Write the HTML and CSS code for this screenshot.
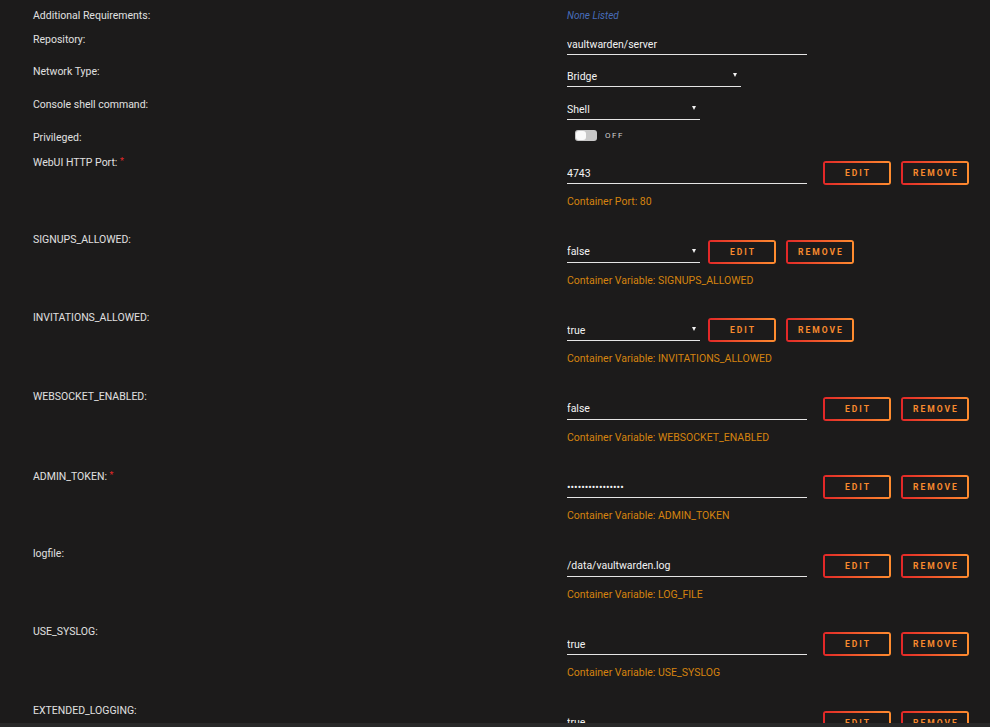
FILE: index.html
```html
<!DOCTYPE html>
<html>
<head>
    <title>Update Container - vaultwarden</title>
    <link rel="stylesheet" href="styles.css">
</head>
<body>
    <form class="template" id="templateForm">
        <div class="row row-a">
            <div class="label">Additional Requirements:</div>
            <div class="value"><span class="blue-text">None Listed</span></div>
        </div>

        <div class="row row-b">
            <div class="label">Repository:</div>
            <div class="value pad1">
                <input type="text" class="text-input" name="repository" value="vaultwarden/server">
            </div>
        </div>

        <div class="row row-c">
            <div class="label">Network Type:</div>
            <div class="value pad1">
                <span class="select-wrap wide">
                    <select name="network">
                        <option>Bridge</option>
                        <option>Host</option>
                        <option>None</option>
                    </select>
                </span>
            </div>
        </div>

        <div class="row row-c">
            <div class="label">Console shell command:</div>
            <div class="value pad1">
                <span class="select-wrap">
                    <select name="shell">
                        <option>Shell</option>
                        <option>Bash</option>
                    </select>
                </span>
            </div>
        </div>

        <div class="row row-e">
            <div class="label">Privileged:</div>
            <div class="value pad1">
                <label class="switch">
                    <span class="switch-track"><span class="switch-knob"></span></span>
                    <span class="switch-text">OFF</span>
                </label>
            </div>
        </div>

        <!-- config entries -->
        <div class="row row-config">
            <div class="label">WebUI HTTP Port: <span class="required">*</span></div>
            <div class="value pad9">
                <div class="field">
                    <input type="text" class="text-input spaced" value="4743">
                    <button type="button" class="btn">Edit</button>
                    <button type="button" class="btn">Remove</button>
                </div>
                <div class="orange-text">Container Port: 80</div>
            </div>
        </div>

        <div class="row row-config">
            <div class="label">SIGNUPS_ALLOWED:</div>
            <div class="value pad9">
                <div class="field">
                    <span class="select-wrap">
                        <select><option>false</option><option>true</option></select>
                    </span>
                    <button type="button" class="btn">Edit</button>
                    <button type="button" class="btn">Remove</button>
                </div>
                <div class="orange-text">Container Variable: SIGNUPS_ALLOWED</div>
            </div>
        </div>

        <div class="row row-config">
            <div class="label">INVITATIONS_ALLOWED:</div>
            <div class="value pad9">
                <div class="field">
                    <span class="select-wrap">
                        <select><option>true</option><option>false</option></select>
                    </span>
                    <button type="button" class="btn">Edit</button>
                    <button type="button" class="btn">Remove</button>
                </div>
                <div class="orange-text">Container Variable: INVITATIONS_ALLOWED</div>
            </div>
        </div>

        <div class="row row-config">
            <div class="label">WEBSOCKET_ENABLED:</div>
            <div class="value pad9">
                <div class="field">
                    <input type="text" class="text-input spaced" value="false">
                    <button type="button" class="btn">Edit</button>
                    <button type="button" class="btn">Remove</button>
                </div>
                <div class="orange-text">Container Variable: WEBSOCKET_ENABLED</div>
            </div>
        </div>

        <div class="row row-config">
            <div class="label">ADMIN_TOKEN: <span class="required">*</span></div>
            <div class="value pad9">
                <div class="field">
                    <input type="password" class="text-input spaced" value="abcdefghijklmnop">
                    <button type="button" class="btn">Edit</button>
                    <button type="button" class="btn">Remove</button>
                </div>
                <div class="orange-text">Container Variable: ADMIN_TOKEN</div>
            </div>
        </div>

        <div class="row row-config">
            <div class="label">logfile:</div>
            <div class="value pad9">
                <div class="field">
                    <input type="text" class="text-input spaced" value="/data/vaultwarden.log">
                    <button type="button" class="btn">Edit</button>
                    <button type="button" class="btn">Remove</button>
                </div>
                <div class="orange-text">Container Variable: LOG_FILE</div>
            </div>
        </div>

        <div class="row row-config">
            <div class="label">USE_SYSLOG:</div>
            <div class="value pad9">
                <div class="field">
                    <input type="text" class="text-input spaced" value="true">
                    <button type="button" class="btn">Edit</button>
                    <button type="button" class="btn">Remove</button>
                </div>
                <div class="orange-text">Container Variable: USE_SYSLOG</div>
            </div>
        </div>

        <div class="row row-config">
            <div class="label">EXTENDED_LOGGING:</div>
            <div class="value pad9">
                <div class="field">
                    <input type="text" class="text-input spaced" value="true">
                    <button type="button" class="btn">Edit</button>
                    <button type="button" class="btn">Remove</button>
                </div>
                <div class="orange-text">Container Variable: EXTENDED_LOGGING</div>
            </div>
        </div>
    </form>

    <div class="footer"></div>
</body>
</html>
```

FILE: styles.css
```css
body {
    margin: 0;
    background-color: #1c1b1b;
    color: #f2f2f2;
    font-family: Roboto, "Noto Sans", sans-serif;
    font-size: 10.5px;
}

.template {
    padding: 7px 0 0 33px;
}

.row {
    display: flex;
    align-items: flex-start;
}

.row-a { height: 24px; }
.row-b { height: 32px; }
.row-c { height: 33px; }
.row-e { height: 23px; }
.row-config { height: 78.5px; }

.label {
    flex: none;
    width: 534px;
    padding-top: 1px;
    line-height: 16px;
    color: #e0e0e0;
}

.value {
    flex: 1;
    line-height: 16px;
}

.pad1 { padding-top: 1px; }
.pad9 { padding-top: 9px; }

.required {
    color: #e22828;
    font-size: 9px;
    vertical-align: 2px;
}

.blue-text {
    display: inline-block;
    padding-top: 1px;
    color: #486dba;
    font-style: italic;
    font-size: 10px;
}

.orange-text {
    margin-top: 9px;
    color: #d4830f;
}

.field {
    display: flex;
    align-items: flex-start;
}

.text-input {
    width: 240px;
    height: 23px;
    box-sizing: border-box;
    margin: 0;
    padding: 2px 0 0 0;
    border: 0;
    border-bottom: 1px solid #e5e5e5;
    background: transparent;
    color: #f2f2f2;
    font-family: inherit;
    font-size: 10.5px;
    outline: none;
}

.text-input.spaced {
    margin-right: 16px;
}

.select-wrap {
    position: relative;
    display: block;
    width: 133px;
    margin-right: 8px;
}

.select-wrap.wide {
    width: 174px;
}

.select-wrap select {
    appearance: none;
    -webkit-appearance: none;
    display: block;
    width: 100%;
    height: 23px;
    margin: 0;
    padding: 2px 0 0 0;
    border: 0;
    border-bottom: 1px solid #e5e5e5;
    border-radius: 0;
    background: transparent;
    color: #f2f2f2;
    font-family: inherit;
    font-size: 10.5px;
    outline: none;
}

.select-wrap::after {
    content: "";
    position: absolute;
    right: 4px;
    top: 9px;
    border-left: 2.5px solid transparent;
    border-right: 2.5px solid transparent;
    border-top: 4px solid #f2f2f2;
    pointer-events: none;
}

.btn {
    width: 68px;
    height: 24px;
    box-sizing: border-box;
    margin: 0 10px 0 0;
    padding: 0 0 0 2px;
    border: 0;
    border-radius: 3px;
    font-family: inherit;
    font-size: 8.5px;
    font-weight: bold;
    letter-spacing: 2px;
    text-transform: uppercase;
    color: #f88a2e;
    cursor: pointer;
    background:
        linear-gradient(90deg, #e22828, #ff8c2f) 0 0 / 100% 2px no-repeat,
        linear-gradient(90deg, #e22828, #ff8c2f) 0 100% / 100% 2px no-repeat,
        linear-gradient(#e22828, #e22828) 0 0 / 2px 100% no-repeat,
        linear-gradient(#ff8c2f, #ff8c2f) 100% 0 / 2px 100% no-repeat;
}

.switch {
    display: flex;
    align-items: center;
    margin-left: 8px;
    height: 11px;
}

.switch-track {
    position: relative;
    width: 22px;
    height: 11px;
    box-sizing: border-box;
    border-radius: 3px;
    background-color: #c8c8c8;
}

.switch-knob {
    position: absolute;
    left: 1px;
    top: 1px;
    width: 10px;
    height: 9px;
    border-radius: 3px;
    background-color: #fafafa;
}

.switch-text {
    margin-left: 8px;
    padding-top: 1px;
    font-size: 8px;
    letter-spacing: 1.5px;
    color: #d0d0d0;
}

.footer {
    position: fixed;
    left: 0;
    right: 0;
    bottom: 0;
    height: 4px;
    background-color: #282828;
}
```
